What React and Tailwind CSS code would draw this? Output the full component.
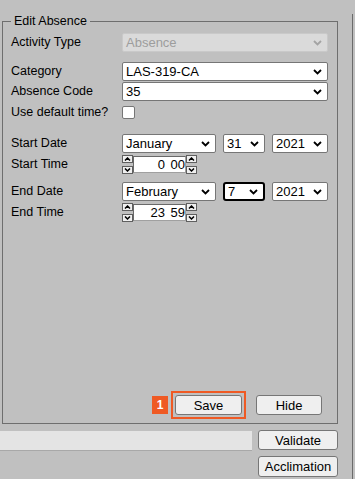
import React from 'react';

const Chevron = ({ color = '#000' }) => (
  <svg width="9" height="6" viewBox="0 0 9 6" className="shrink-0">
    <path d="M1 1l3.5 3.5L8 1" fill="none" stroke={color} strokeWidth="1.8" />
  </svg>
);

const Select = ({ value, w, focused, disabled }) => (
  <div
    className={`h-[19px] ${w} flex items-center justify-between pl-[3px] pr-[5px] text-[13px] leading-none ${
      disabled
        ? 'bg-[#dadada] border border-[#c9c9c9] text-[#9d9d9d] rounded-[2px]'
        : focused
        ? 'bg-white border-2 border-black rounded-[3px] pl-[2px] pr-[4px]'
        : 'bg-white border border-[#767676] rounded-[2px]'
    }`}
  >
    <span>{value}</span>
    <Chevron color={disabled ? '#a3a3a3' : '#000'} />
  </div>
);

const Caret = ({ up }) => (
  <div className="w-[11px] h-[8px] bg-[#f0f0f0] border border-[#5f5f5f] flex items-center justify-center">
    <svg width="7" height="4" viewBox="0 0 7 4">
      <path d={up ? 'M1 3.5L3.5 1 6 3.5' : 'M1 0.5L3.5 3 6 0.5'} fill="none" stroke="#000" strokeWidth="1.5" />
    </svg>
  </div>
);

const Spinner = ({ hour, minute }) => (
  <div className="h-[19px] flex items-center">
    <div className="flex flex-col gap-[3px]">
      <Caret up />
      <Caret />
    </div>
    <div className="w-[53px] h-[17px] bg-white border border-[#a0a0a0] border-t-[#696969] border-l-[#696969] flex items-center text-[13px] leading-none">
      <span className="w-[31px] text-right">{hour}</span>
      <span className="w-[20px] text-right">{minute}</span>
    </div>
    <div className="flex flex-col gap-[3px]">
      <Caret up />
      <Caret />
    </div>
  </div>
);

const Label = ({ children }) => (
  <div className="w-[111px] shrink-0 text-[12.5px] leading-none">{children}</div>
);

const Btn = ({ children, w, h = 'h-[20px]' }) => (
  <button className={`${w} ${h} bg-[#efefef] border border-[#767676] rounded-[3px] text-[13px] leading-none text-black flex items-center justify-center`}>
    {children}
  </button>
);

export default function App() {
  return (
    <div className="w-[355px] h-[479px] bg-[#c0c0c0] overflow-hidden text-black font-['Liberation_Sans',Arial,sans-serif]">
      <div className="w-[353px] h-full border-r border-[#6b6b6b]">
        <fieldset className="ml-[2px] mt-[14px] w-[336px] h-[410px] border border-[#6e6e6e] p-0 m-0">
          <legend className="ml-[8px] px-[3px] text-[12.5px] leading-[14px]">Edit Absence</legend>
          <div className="h-[394px] flex flex-col pl-[8px] pr-[9px]">
            <div className="mt-[5px] flex items-center">
              <Label>Activity Type</Label>
              <Select value="Absence" w="w-[206px]" disabled />
            </div>
            <div className="mt-[10px] flex items-center">
              <Label>Category</Label>
              <Select value="LAS-319-CA" w="w-[206px]" />
            </div>
            <div className="mt-[1px] flex items-center">
              <Label>Absence Code</Label>
              <Select value="35" w="w-[206px]" />
            </div>
            <div className="mt-[5px] flex items-center h-[13px]">
              <Label>Use default time?</Label>
              <div className="w-[13px] h-[13px] bg-white border border-[#767676] rounded-[2px]" />
            </div>
            <div className="mt-[15px] flex items-center">
              <Label>Start Date</Label>
              <div className="flex items-center">
                <Select value="January" w="w-[94px]" />
                <div className="ml-[7px]">
                  <Select value="31" w="w-[42px]" />
                </div>
                <div className="ml-[7px]">
                  <Select value="2021" w="w-[56px]" />
                </div>
              </div>
            </div>
            <div className="mt-[2px] flex items-center">
              <Label>Start Time</Label>
              <Spinner hour="0" minute="00" />
            </div>
            <div className="mt-[8px] flex items-center">
              <Label>End Date</Label>
              <div className="flex items-center">
                <Select value="February" w="w-[94px]" />
                <div className="ml-[7px]">
                  <Select value="7" w="w-[42px]" focused />
                </div>
                <div className="ml-[7px]">
                  <Select value="2021" w="w-[56px]" />
                </div>
              </div>
            </div>
            <div className="mt-[2px] flex items-center">
              <Label>End Time</Label>
              <Spinner hour="23" minute="59" />
            </div>

            <div className="mt-auto mb-[3px] flex items-center justify-end mr-[6px]">
              <div className="w-[16px] h-[18px] bg-[#ef5a24] text-white text-[12px] font-bold flex items-center justify-center leading-none">
                1
              </div>
              <div className="ml-[3px] border-2 border-[#ef5a24] p-[2px]">
                <Btn w="w-[67px]">Save</Btn>
              </div>
              <div className="ml-[10px]">
                <Btn w="w-[66px]">Hide</Btn>
              </div>
            </div>
          </div>
        </fieldset>

        <div className="mt-[6px] flex items-start">
          <div className="mt-[1px] w-[252px] h-[20px] bg-[#e4e4e4] border-b border-[#a8a8a8]" />
          <div className="ml-[6px] flex flex-col gap-[6px]">
            <Btn w="w-[80px]">Validate</Btn>
            <Btn w="w-[80px]" h="h-[21px]">Acclimation</Btn>
          </div>
        </div>
      </div>
    </div>
  );
}
